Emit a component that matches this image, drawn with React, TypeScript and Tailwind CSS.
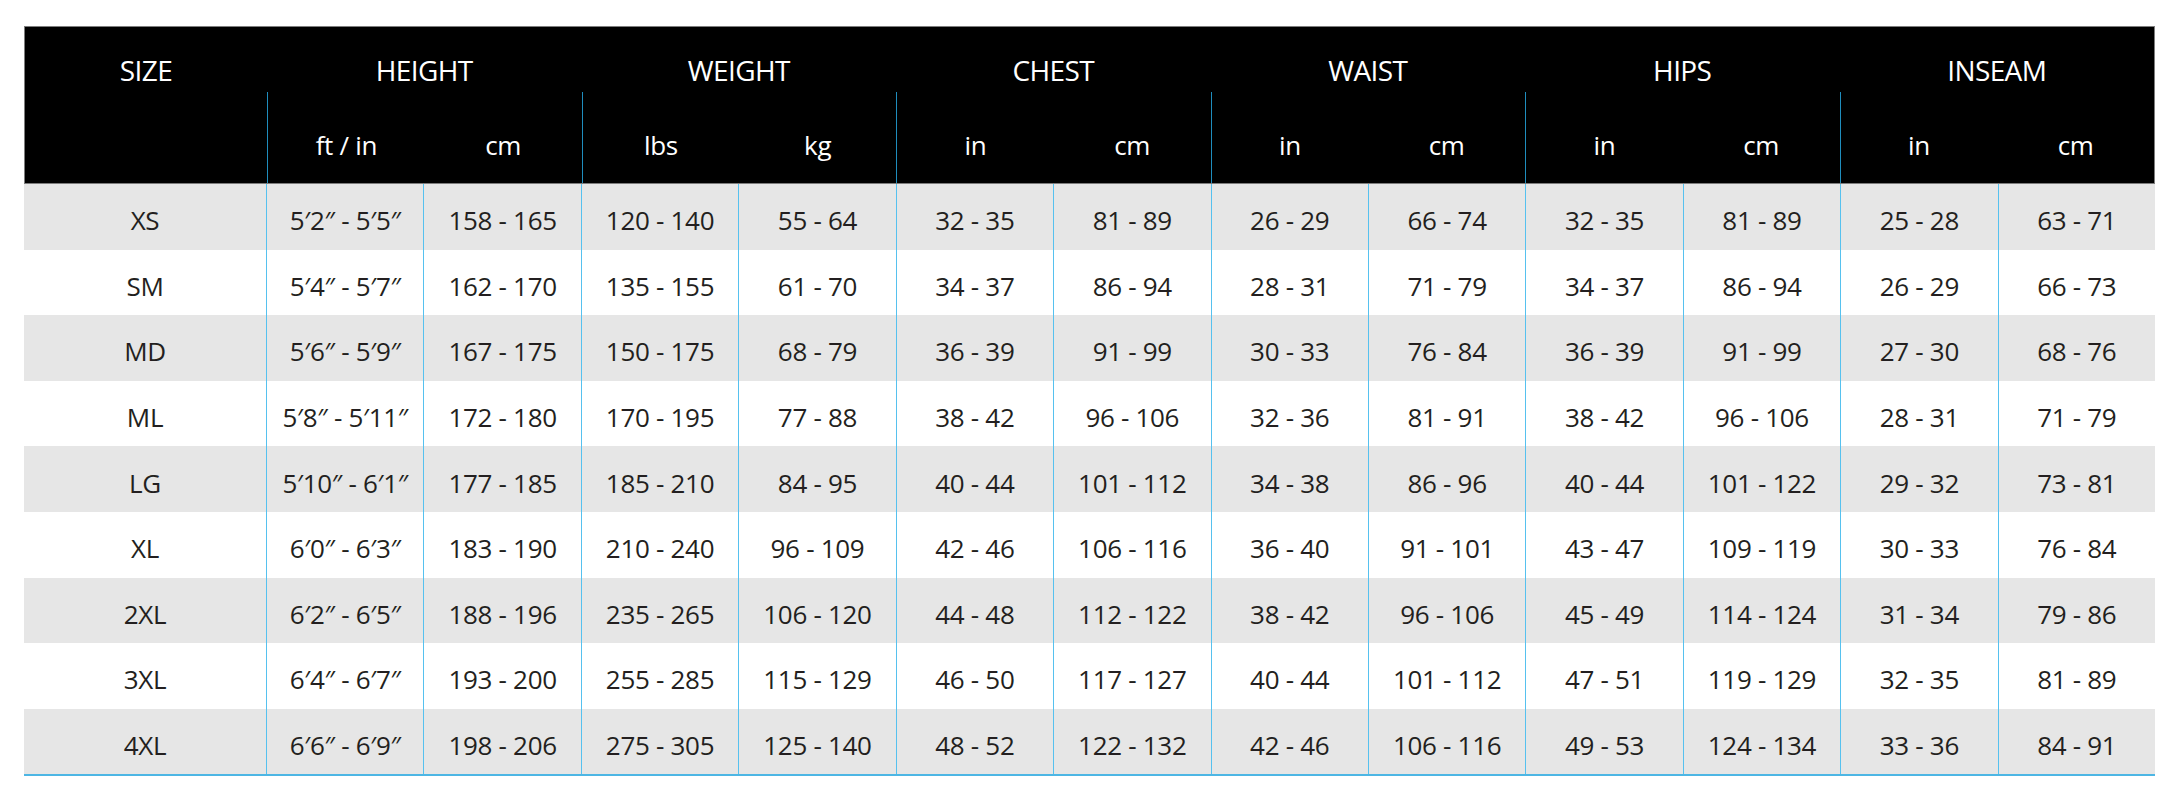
import React from "react";

// Size chart: black two-level header, striped body rows, blue column rules

const groups = ["HEIGHT", "WEIGHT", "CHEST", "WAIST", "HIPS", "INSEAM"];
const units = ["ft / in", "cm", "lbs", "kg", "in", "cm", "in", "cm", "in", "cm", "in", "cm"];

const rows: string[][] = [
  ["XS", "5′2″ - 5′5″", "158 - 165", "120 - 140", "55 - 64", "32 - 35", "81 - 89", "26 - 29", "66 - 74", "32 - 35", "81 - 89", "25 - 28", "63 - 71"],
  ["SM", "5′4″ - 5′7″", "162 - 170", "135 - 155", "61 - 70", "34 - 37", "86 - 94", "28 - 31", "71 - 79", "34 - 37", "86 - 94", "26 - 29", "66 - 73"],
  ["MD", "5′6″ - 5′9″", "167 - 175", "150 - 175", "68 - 79", "36 - 39", "91 - 99", "30 - 33", "76 - 84", "36 - 39", "91 - 99", "27 - 30", "68 - 76"],
  ["ML", "5′8″ - 5′11″", "172 - 180", "170 - 195", "77 - 88", "38 - 42", "96 - 106", "32 - 36", "81 - 91", "38 - 42", "96 - 106", "28 - 31", "71 - 79"],
  ["LG", "5′10″ - 6′1″", "177 - 185", "185 - 210", "84 - 95", "40 - 44", "101 - 112", "34 - 38", "86 - 96", "40 - 44", "101 - 122", "29 - 32", "73 - 81"],
  ["XL", "6′0″ - 6′3″", "183 - 190", "210 - 240", "96 - 109", "42 - 46", "106 - 116", "36 - 40", "91 - 101", "43 - 47", "109 - 119", "30 - 33", "76 - 84"],
  ["2XL", "6′2″ - 6′5″", "188 - 196", "235 - 265", "106 - 120", "44 - 48", "112 - 122", "38 - 42", "96 - 106", "45 - 49", "114 - 124", "31 - 34", "79 - 86"],
  ["3XL", "6′4″ - 6′7″", "193 - 200", "255 - 285", "115 - 129", "46 - 50", "117 - 127", "40 - 44", "101 - 112", "47 - 51", "119 - 129", "32 - 35", "81 - 89"],
  ["4XL", "6′6″ - 6′9″", "198 - 206", "275 - 305", "125 - 140", "48 - 52", "122 - 132", "42 - 46", "106 - 116", "49 - 53", "124 - 134", "33 - 36", "84 - 91"],
];

export default function App() {
  return (
    <div className="min-h-screen bg-white pt-[26px] pl-[24px] font-['Open_Sans',sans-serif]">
      <div className="w-[2131px]">
        {/* Header */}
        <div className="grid h-[158px] grid-cols-[242px_repeat(6,1fr)] border border-[#7d7d7d] bg-black text-white">
          <div className="flex h-[66px] items-center justify-center pt-[20px] text-[28px] tracking-[-0.6px] [font-stretch:88%]">
            SIZE
          </div>
          {groups.map((g, gi) => (
            <div key={g} className="flex flex-col">
              <div className="flex h-[65px] items-center justify-center pt-[20px] text-[28px] tracking-[-0.6px] [font-stretch:88%]">
                {g}
              </div>
              <div className="flex flex-1 border-l border-[#1f8dbd]">
                {units.slice(gi * 2, gi * 2 + 2).map((u, ui) => (
                  <div
                    key={ui}
                    className="flex flex-1 items-center justify-center pt-[16px] text-[26px] tracking-[-0.3px]"
                  >
                    {u}
                  </div>
                ))}
              </div>
            </div>
          ))}
        </div>

        {/* Body */}
        <div className="border-b-2 border-[#4db6e4] text-[#231f20]">
          {rows.map((r, ri) => (
            <div
              key={r[0]}
              className={`grid h-[65.6px] grid-cols-[242px_repeat(12,1fr)] ${ri % 2 === 0 ? "bg-[#e6e6e6]" : "bg-white"}`}
            >
              {r.map((c, ci) => (
                <div
                  key={ci}
                  className={`flex items-center justify-center pt-[8px] text-[26px] tracking-[-0.3px] ${ci > 0 ? "border-l-[1.5px] border-[#56c1ef]" : ""}`}
                >
                  {c}
                </div>
              ))}
            </div>
          ))}
        </div>
      </div>
    </div>
  );
}
